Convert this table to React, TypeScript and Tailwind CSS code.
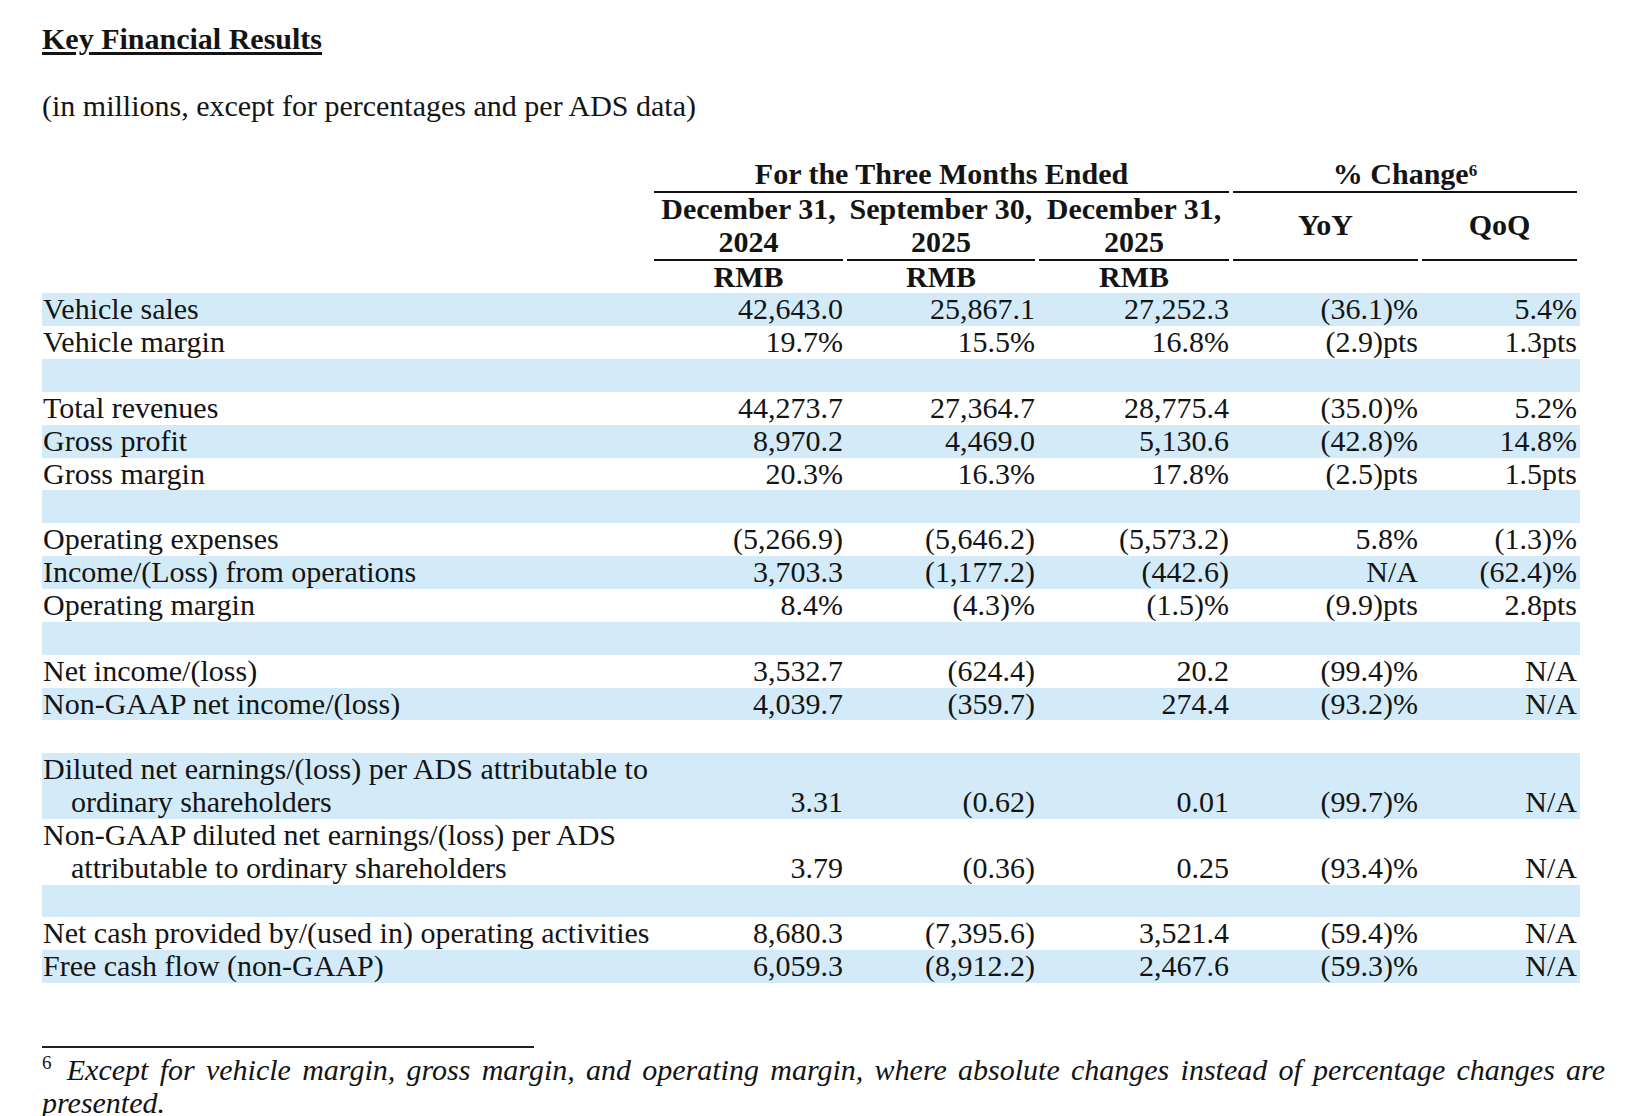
import { Fragment } from 'react'

type Row = { label: string[]; values: string[] }

const EMPTY: Row = { label: [], values: [] }

const ROWS: Row[] = [
  { label: ['Vehicle sales'], values: ['42,643.0', '25,867.1', '27,252.3', '(36.1)%', '5.4%'] },
  { label: ['Vehicle margin'], values: ['19.7%', '15.5%', '16.8%', '(2.9)pts', '1.3pts'] },
  EMPTY,
  { label: ['Total revenues'], values: ['44,273.7', '27,364.7', '28,775.4', '(35.0)%', '5.2%'] },
  { label: ['Gross profit'], values: ['8,970.2', '4,469.0', '5,130.6', '(42.8)%', '14.8%'] },
  { label: ['Gross margin'], values: ['20.3%', '16.3%', '17.8%', '(2.5)pts', '1.5pts'] },
  EMPTY,
  { label: ['Operating expenses'], values: ['(5,266.9)', '(5,646.2)', '(5,573.2)', '5.8%', '(1.3)%'] },
  { label: ['Income/(Loss) from operations'], values: ['3,703.3', '(1,177.2)', '(442.6)', 'N/A', '(62.4)%'] },
  { label: ['Operating margin'], values: ['8.4%', '(4.3)%', '(1.5)%', '(9.9)pts', '2.8pts'] },
  EMPTY,
  { label: ['Net income/(loss)'], values: ['3,532.7', '(624.4)', '20.2', '(99.4)%', 'N/A'] },
  { label: ['Non-GAAP net income/(loss)'], values: ['4,039.7', '(359.7)', '274.4', '(93.2)%', 'N/A'] },
  EMPTY,
  {
    label: ['Diluted net earnings/(loss) per ADS attributable to', 'ordinary shareholders'],
    values: ['3.31', '(0.62)', '0.01', '(99.7)%', 'N/A'],
  },
  {
    label: ['Non-GAAP diluted net earnings/(loss) per ADS', 'attributable to ordinary shareholders'],
    values: ['3.79', '(0.36)', '0.25', '(93.4)%', 'N/A'],
  },
  EMPTY,
  {
    label: ['Net cash provided by/(used in) operating activities'],
    values: ['8,680.3', '(7,395.6)', '3,521.4', '(59.4)%', 'N/A'],
  },
  { label: ['Free cash flow (non-GAAP)'], values: ['6,059.3', '(8,912.2)', '2,467.6', '(59.3)%', 'N/A'] },
]

const COLS = 'grid grid-cols-[610px_193px_192px_194px_189px_160px]'

function DataRow({ row, shaded }: { row: Row; shaded: boolean }) {
  const lines = Math.max(1, row.label.length)
  return (
    <div className={`${COLS} ${shaded ? 'bg-[#d3ebf8]' : ''}`}>
      <div className="pl-[1px]">
        {row.label.length === 0 ? (
          <div className="h-[32.85px]" />
        ) : (
          row.label.map((l, i) => (
            <div key={i} className={`h-[32.85px] whitespace-nowrap ${i > 0 ? 'pl-[28px]' : ''}`}>
              {l}
            </div>
          ))
        )}
      </div>
      {[0, 1, 2, 3, 4].map((c) => (
        <div key={c} className={`flex flex-col justify-end text-right ${c === 4 ? 'pr-[3px]' : 'pr-[2px]'}`}>
          {lines > 1 && <div className="h-[32.85px]" />}
          <div className="h-[32.85px] whitespace-nowrap">{row.values[c] ?? ''}</div>
        </div>
      ))}
    </div>
  )
}

function Header() {
  const dates = [
    ['December 31,', '2024'],
    ['September 30,', '2025'],
    ['December 31,', '2025'],
  ]
  return (
    <div className="font-bold">
      <div className={COLS}>
        <div />
        <div className="col-span-3 px-[2px]">
          <div className="h-[34.85px] border-b-2 border-[#111] text-center">For the Three Months Ended</div>
        </div>
        <div className="col-span-2 pl-[2px] pr-[3px]">
          <div className="h-[34.85px] border-b-2 border-[#111] text-center">
            % Change<sup className="text-[17px]">6</sup>
          </div>
        </div>
      </div>
      <div className={COLS}>
        <div />
        {dates.map((d, i) => (
          <div key={i} className="px-[2px]">
            <div className="h-[67.7px] border-b-2 border-[#111] text-center whitespace-nowrap">
              <div className="h-[32.85px]">{d[0]}</div>
              <div className="h-[32.85px]">{d[1]}</div>
            </div>
          </div>
        ))}
        <div className="px-[2px]">
          <div className="flex h-[67.7px] items-center justify-center border-b-2 border-[#111]">YoY</div>
        </div>
        <div className="pl-[2px] pr-[3px]">
          <div className="flex h-[67.7px] items-center justify-center border-b-2 border-[#111]">QoQ</div>
        </div>
      </div>
      <div className={COLS}>
        <div />
        {[0, 1, 2].map((i) => (
          <div key={i} className="h-[32.85px] text-center">
            RMB
          </div>
        ))}
        <div />
        <div />
      </div>
    </div>
  )
}

export default function App() {
  return (
    <div className="min-h-screen bg-white pl-[42px] pt-[23px] font-['Liberation_Serif','Times_New_Roman',serif] text-[30px] leading-[32.85px] text-[#141414]">
      <h1 className="h-[33px] font-bold underline decoration-[3px] underline-offset-[3px]">Key Financial Results</h1>
      <p className="mt-[34px] h-[33px]">(in millions, except for percentages and per ADS data)</p>

      <div className="mt-[35px] w-[1538px]">
        <Header />
        {ROWS.map((row, i) => (
          <Fragment key={i}>
            <DataRow row={row} shaded={i % 2 === 0} />
          </Fragment>
        ))}
      </div>

      <div className="mt-[63px] h-[2px] w-[492px] bg-[#222]" />
      <p className="mt-[5px] w-[1563px] text-justify italic leading-[33px]">
        <span className="relative -top-[11px] mr-[4px] text-[19px] leading-none not-italic">6</span> Except for vehicle
        margin, gross margin, and operating margin, where absolute changes instead of percentage changes are presented.
      </p>
    </div>
  )
}
